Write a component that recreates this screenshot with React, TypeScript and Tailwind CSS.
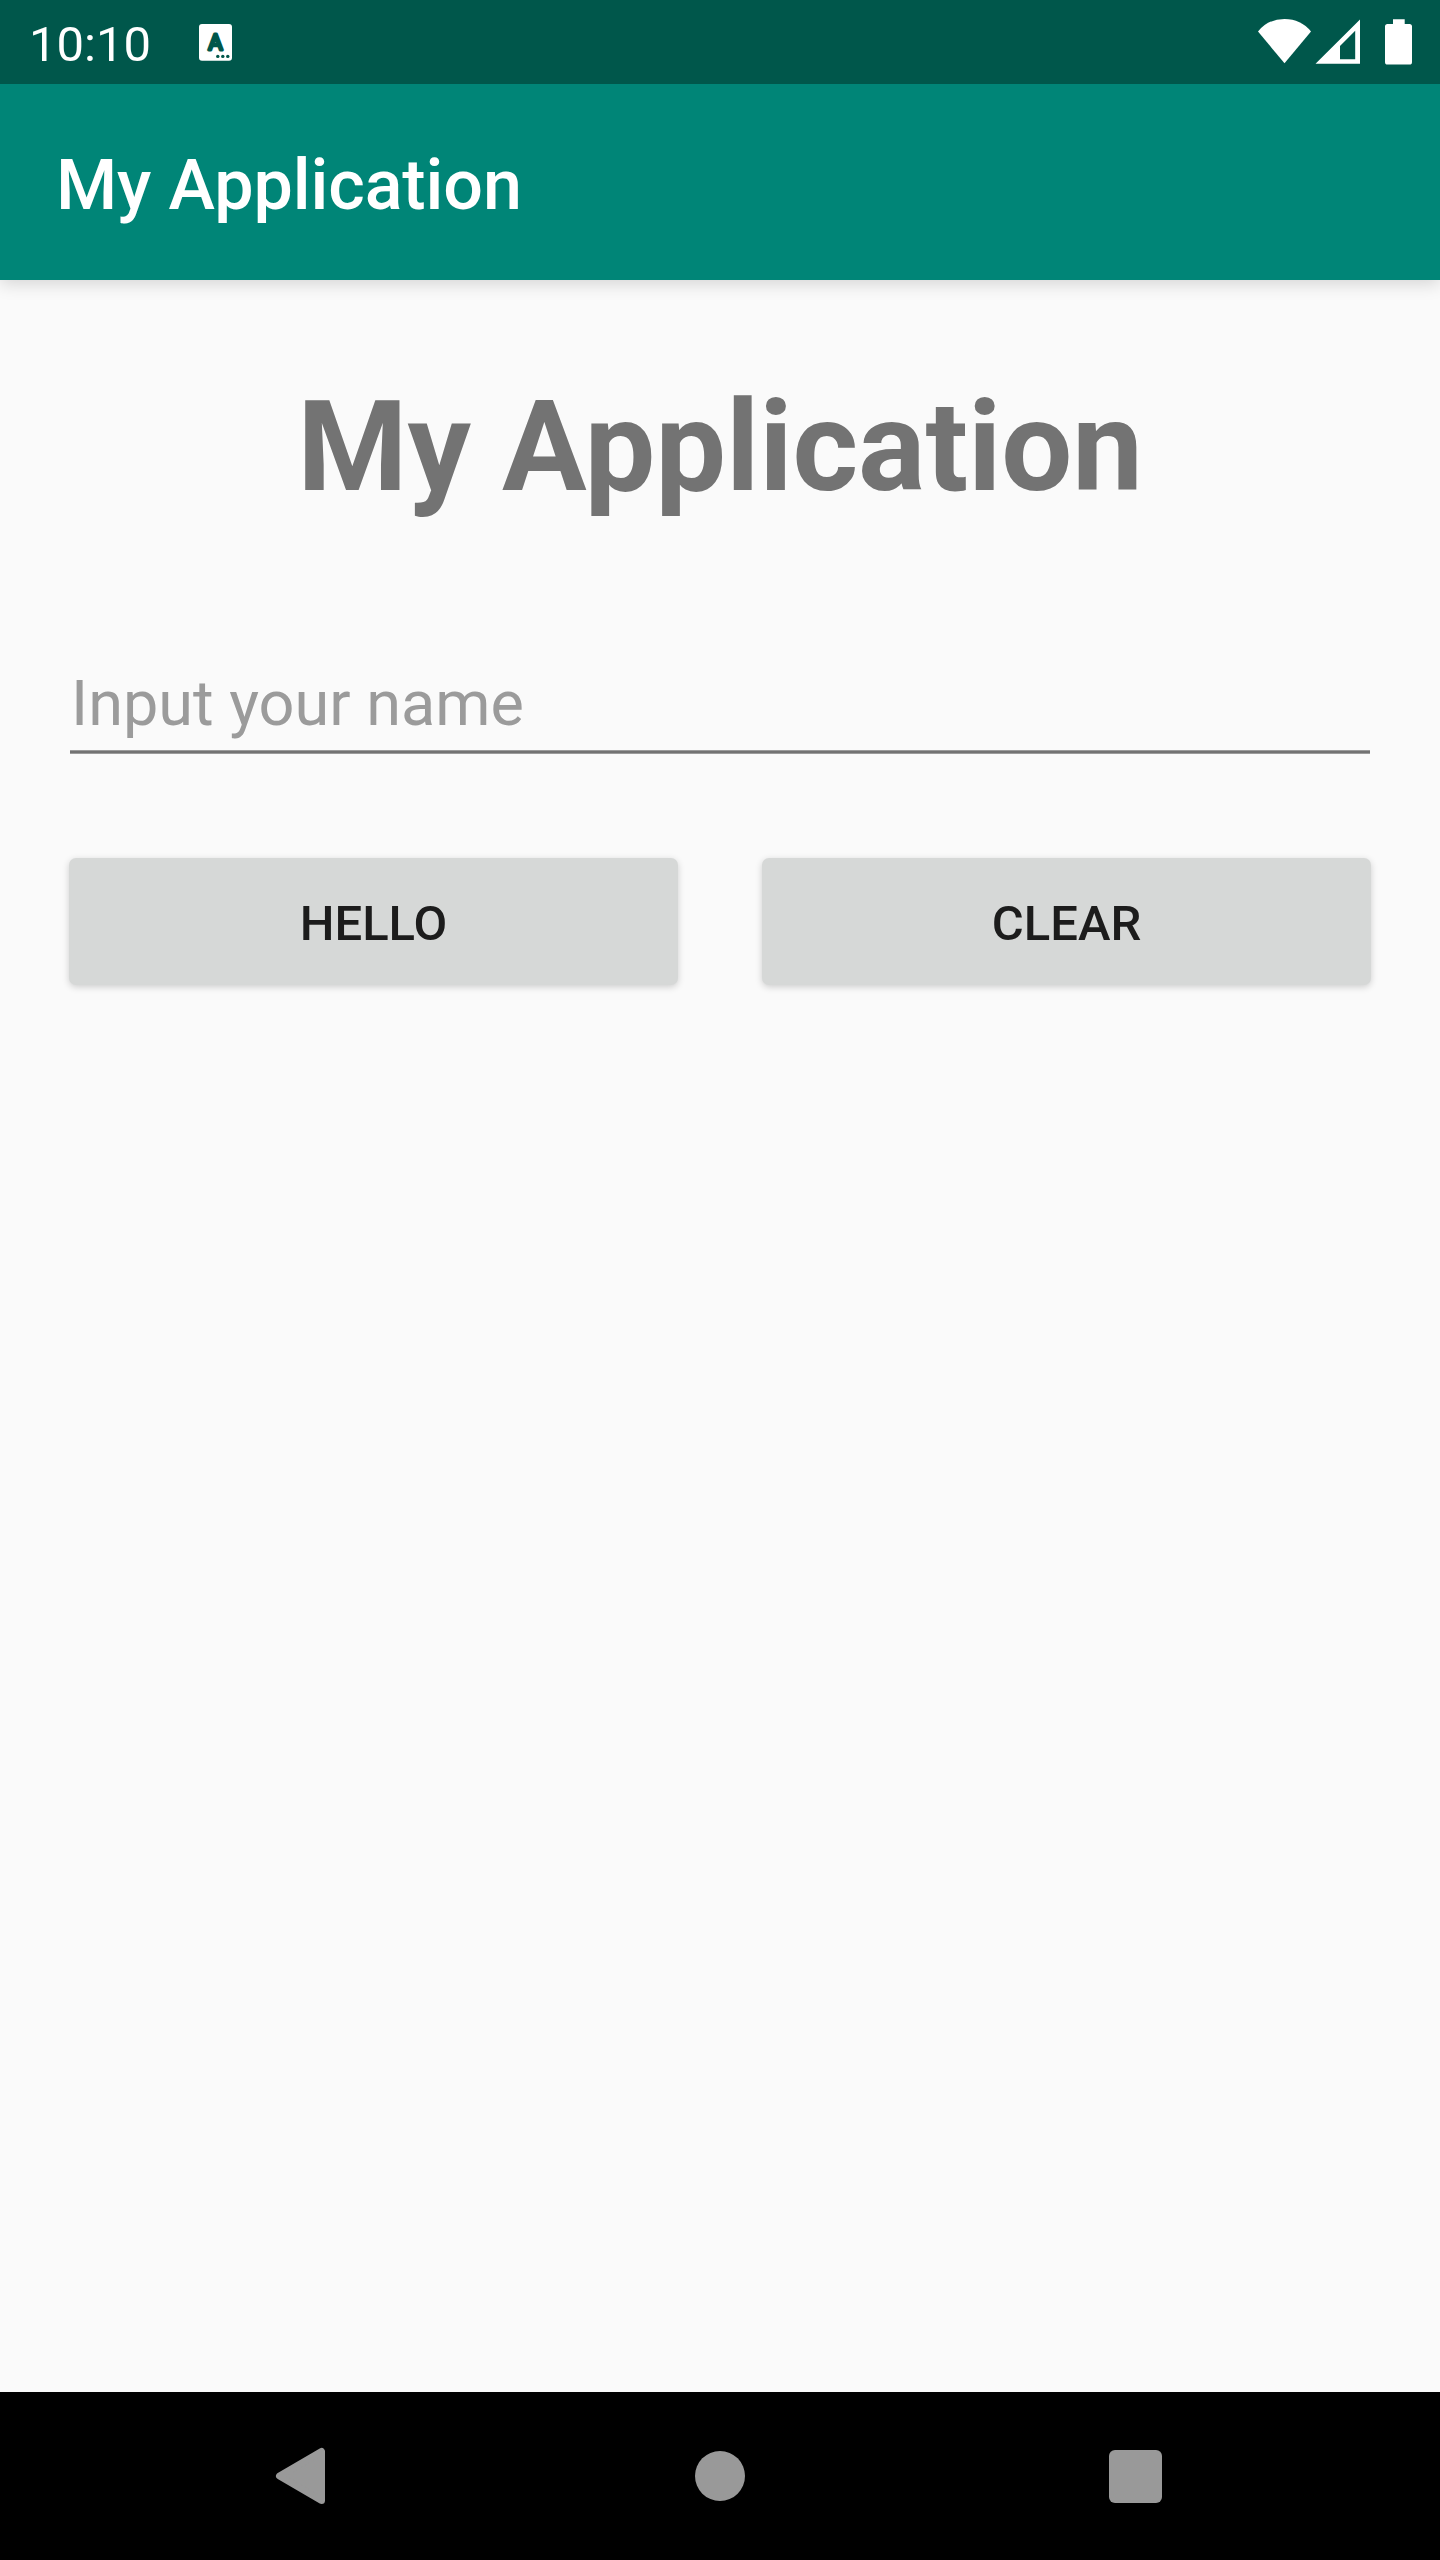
import React from "react";

function KeyboardIcon() {
  return (
    <svg className="ml-12 mt-6 h-[37px] w-[33px]" viewBox="0 0 33 37">
      <rect width="33" height="36.7" rx="3" fill="#fff" />
      <text
        x="16.5"
        y="25.5"
        textAnchor="middle"
        fill="#00574b"
        stroke="#00574b"
        strokeWidth="3"
        strokeLinejoin="round"
        className="font-['Roboto'] text-[22px] font-normal"
      >
        A
      </text>
      <g fill="#00574b">
        <circle cx="18.8" cy="32.4" r="1.7" />
        <circle cx="23.8" cy="32.4" r="1.7" />
        <circle cx="28.8" cy="32.4" r="1.7" />
      </g>
    </svg>
  );
}

function StatusBar() {
  return (
    <div className="relative z-10 flex h-[84px] items-start bg-[#00574b] text-white">
      <span className="ml-[29px] mt-5 text-[49px] leading-none">10:10</span>
      <KeyboardIcon />
      <svg className="ml-auto mr-6 mt-4 h-[52px] w-[160px]" viewBox="1256 16 160 52" fill="#fff">
        <path d="M1258 31.5Q1268 19 1284.5 19T1311 31.5L1284.5 63.3Z" />
        <path fillRule="evenodd" d="M1315.5 63.7L1360 19.5V63.7ZM1340 46V59.2H1355.2V30.8Z" />
        <path d="M1393 19.3H1404.7V24H1409.5Q1412 24 1412 26.5V62Q1412 64.6 1409.5 64.6H1387.5Q1385 64.6 1385 62V26.5Q1385 24 1387.5 24H1393Z" />
      </svg>
    </div>
  );
}

function ActionButton({ label }: { label: string }) {
  return (
    <button className="flex h-[127px] flex-1 items-center justify-center rounded-[7px] bg-[#d6d8d7] pt-1 text-[49px] font-medium leading-none text-[#1c1c1c] shadow-[0_2px_7px_rgba(0,0,0,0.18)]">
      {label}
    </button>
  );
}

function NavigationBar() {
  return (
    <nav className="flex h-[168px] items-center bg-black px-[97.5px]">
      <div className="flex flex-1 justify-center">
        <svg className="h-[60px] w-[60px]" viewBox="-30 -30 60 60">
          <path
            d="M-25.5 0L16.5 -24.5V24.5Z"
            fill="#999"
            stroke="#999"
            strokeWidth="7"
            strokeLinejoin="round"
          />
        </svg>
      </div>
      <div className="flex flex-1 justify-center">
        <div className="h-[50px] w-[50px] rounded-full bg-[#999]" />
      </div>
      <div className="flex flex-1 justify-center">
        <div className="h-[53px] w-[53px] rounded-[6px] bg-[#999]" />
      </div>
    </nav>
  );
}

export default function App() {
  return (
    <div className="flex h-[2560px] w-[1440px] flex-col overflow-hidden bg-[#fafafa] font-['Roboto',sans-serif]">
      <StatusBar />
      <header className="h-[196px] bg-[#008577] pl-14 pt-[66px] shadow-[0_4px_16px_rgba(0,0,0,0.15)]">
        <div className="text-[70px] font-medium leading-none tracking-[-0.1px] text-white">My Application</div>
      </header>
      <main className="flex flex-1 flex-col px-[69px] pt-[104px]">
        <h1 className="text-center text-[126px] font-bold leading-none tracking-[-0.1px] text-[#737373]">
          My Application
        </h1>
        <div className="mx-px mt-[162px] h-[78px] pl-px text-[63px] leading-none text-[#9b9b9b]">
          Input your name
        </div>
        <div className="mx-px h-1 border-y border-[#9b9b9b] bg-[#737373]" />
        <div className="mt-[104px] flex gap-[84px]">
          <ActionButton label="HELLO" />
          <ActionButton label="CLEAR" />
        </div>
      </main>
      <NavigationBar />
    </div>
  );
}
